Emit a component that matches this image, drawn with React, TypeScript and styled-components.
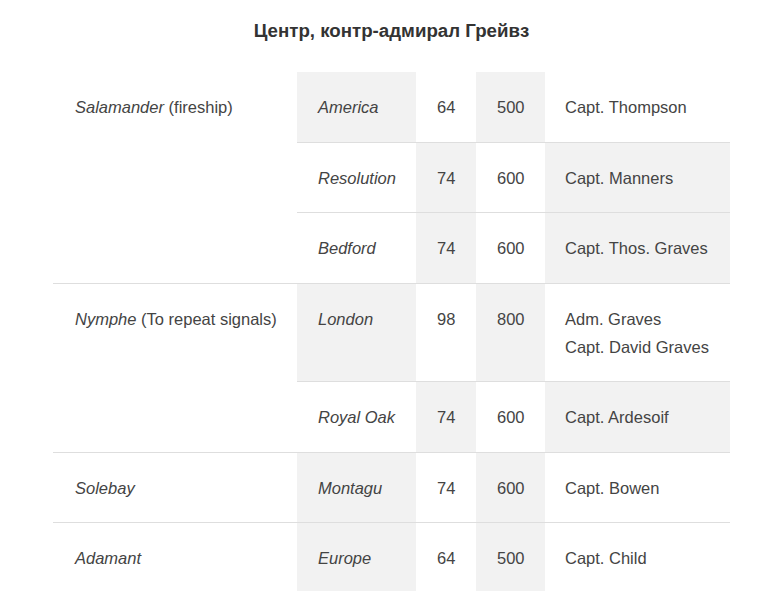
import React from "react";
import styled, { createGlobalStyle } from "styled-components";

const GlobalStyle = createGlobalStyle`
  html, body { margin: 0; padding: 0; background: #fff; }
  body { font-family: "Liberation Sans", Arial, sans-serif; color: #444; }
`;

const Page = styled.div`
  padding: 0 50px 0 53px;
`;

const Title = styled.h3`
  margin: 0;
  padding: 20px 0 0;
  height: 53px;
  box-sizing: border-box;
  text-align: center;
  font-size: 18.7px;
  line-height: 22px;
  font-weight: bold;
  color: #333;
`;

const Table = styled.table`
  width: 100%;
  table-layout: fixed;
  border-collapse: collapse;
  margin-top: 19px;
  font-family: "Liberation Sans", Arial, sans-serif;
  font-size: 16.5px;
  line-height: 28px;

  td:nth-child(even) {
    background: #f2f2f2;
  }
`;

const Row = styled.tr`
  & + & > td {
    border-top: 1px solid #dedede;
  }
`;

const Cell = styled.td<{ $pl?: number }>`
  padding: 21px 10px 20.5px ${(p) => p.$pl ?? 21}px;
  vertical-align: top;
  text-align: left;
  color: #444;
`;

const Line = styled.div``;

type Ship = { name: string; guns: string; men: string; captains: string[] };
type Group = { escort: string; note?: string; ships: Ship[] };

const groups: Group[] = [
  {
    escort: "Salamander",
    note: "(fireship)",
    ships: [
      { name: "America", guns: "64", men: "500", captains: ["Capt. Thompson"] },
      { name: "Resolution", guns: "74", men: "600", captains: ["Capt. Manners"] },
      { name: "Bedford", guns: "74", men: "600", captains: ["Capt. Thos. Graves"] },
    ],
  },
  {
    escort: "Nymphe",
    note: "(To repeat signals)",
    ships: [
      { name: "London", guns: "98", men: "800", captains: ["Adm. Graves", "Capt. David Graves"] },
      { name: "Royal Oak", guns: "74", men: "600", captains: ["Capt. Ardesoif"] },
    ],
  },
  {
    escort: "Solebay",
    ships: [{ name: "Montagu", guns: "74", men: "600", captains: ["Capt. Bowen"] }],
  },
  {
    escort: "Adamant",
    ships: [{ name: "Europe", guns: "64", men: "500", captains: ["Capt. Child"] }],
  },
];

export default function App() {
  return (
    <>
      <GlobalStyle />
      <Page>
        <Title>Центр, контр-адмирал Грейвз</Title>
        <Table>
          <colgroup>
            <col style={{ width: 244 }} />
            <col style={{ width: 119 }} />
            <col style={{ width: 60 }} />
            <col style={{ width: 69 }} />
            <col />
          </colgroup>
          <tbody>
            {groups.flatMap((g) =>
              g.ships.map((s, i) => (
                <Row key={g.escort + s.name}>
                  {i === 0 && (
                    <Cell rowSpan={g.ships.length} $pl={22}>
                      <em>{g.escort}</em>
                      {g.note ? " " + g.note : ""}
                    </Cell>
                  )}
                  <Cell>
                    <em>{s.name}</em>
                  </Cell>
                  <Cell>{s.guns}</Cell>
                  <Cell>{s.men}</Cell>
                  <Cell $pl={20}>
                    {s.captains.map((c) => (
                      <Line key={c}>{c}</Line>
                    ))}
                  </Cell>
                </Row>
              ))
            )}
          </tbody>
        </Table>
      </Page>
    </>
  );
}
